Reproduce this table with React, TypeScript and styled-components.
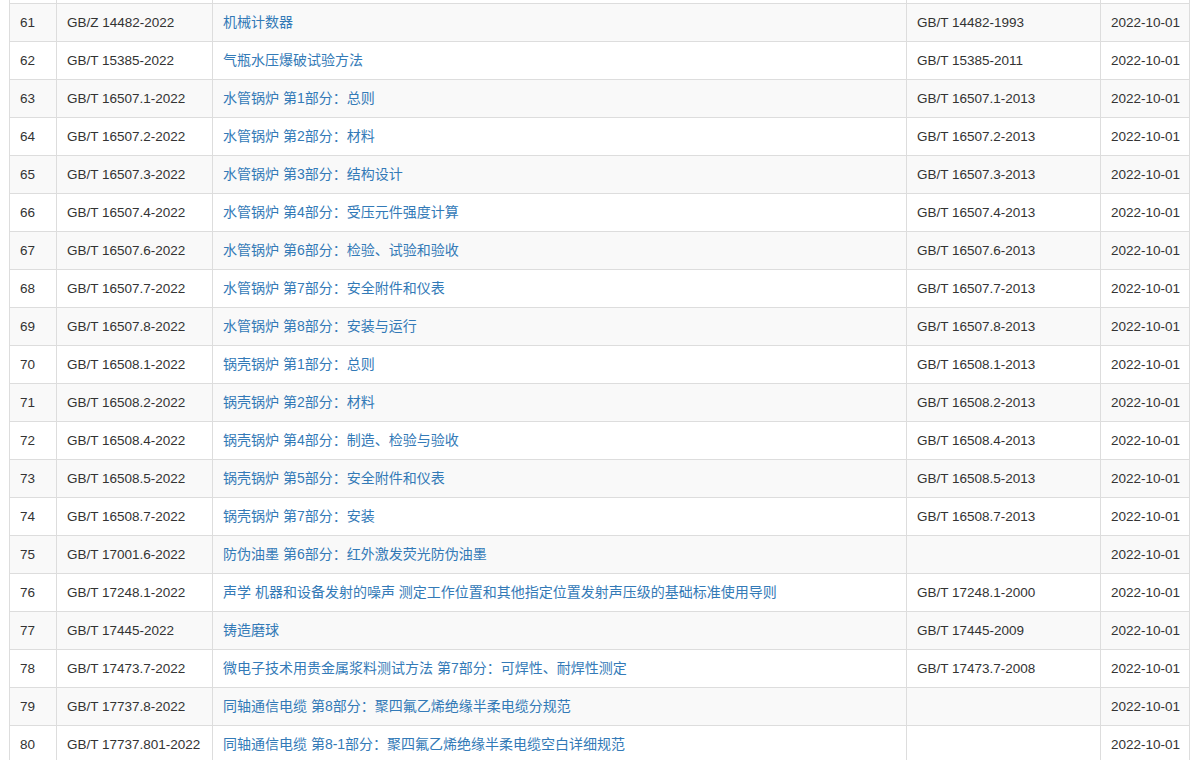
import React from "react";
import styled, { createGlobalStyle } from "styled-components";

const Global = createGlobalStyle`
  html, body { margin: 0; padding: 0; background: #fff; }
  body {
    font-family: "Liberation Sans", Arial, "Noto Sans CJK SC", sans-serif;
    color: #333;
  }
`;

const Viewport = styled.div`
  height: 760px;
  overflow: hidden;
  padding-left: 9px;
`;

const Table = styled.table`
  border-collapse: collapse;
  table-layout: fixed;
  width: 1181px;
  margin-top: -35px;
  border: 1px solid #ddd;
`;

const Row = styled.tr<{ $striped: boolean }>`
  background: ${(p) => (p.$striped ? "#f9f9f9" : "#fff")};
`;

const Cell = styled.td<{ $cjk?: boolean }>`
  border: 1px solid #ddd;
  height: 38px;
  padding: 0 10px;
  box-sizing: border-box;
  vertical-align: middle;
  white-space: nowrap;
  overflow: hidden;
  font-size: ${(p) => (p.$cjk ? "14px" : "13.5px")};
  line-height: 20px;
`;

const TitleLink = styled.a`
  color: #337ab7;
  text-decoration: none;
  position: relative;
  top: -1px;
`;

type Std = [number, string, string, string, string];

const rows: Std[] = [
  [61, "GB/Z 14482-2022", "机械计数器", "GB/T 14482-1993", "2022-10-01"],
  [62, "GB/T 15385-2022", "气瓶水压爆破试验方法", "GB/T 15385-2011", "2022-10-01"],
  [63, "GB/T 16507.1-2022", "水管锅炉 第1部分：总则", "GB/T 16507.1-2013", "2022-10-01"],
  [64, "GB/T 16507.2-2022", "水管锅炉 第2部分：材料", "GB/T 16507.2-2013", "2022-10-01"],
  [65, "GB/T 16507.3-2022", "水管锅炉 第3部分：结构设计", "GB/T 16507.3-2013", "2022-10-01"],
  [66, "GB/T 16507.4-2022", "水管锅炉 第4部分：受压元件强度计算", "GB/T 16507.4-2013", "2022-10-01"],
  [67, "GB/T 16507.6-2022", "水管锅炉 第6部分：检验、试验和验收", "GB/T 16507.6-2013", "2022-10-01"],
  [68, "GB/T 16507.7-2022", "水管锅炉 第7部分：安全附件和仪表", "GB/T 16507.7-2013", "2022-10-01"],
  [69, "GB/T 16507.8-2022", "水管锅炉 第8部分：安装与运行", "GB/T 16507.8-2013", "2022-10-01"],
  [70, "GB/T 16508.1-2022", "锅壳锅炉 第1部分：总则", "GB/T 16508.1-2013", "2022-10-01"],
  [71, "GB/T 16508.2-2022", "锅壳锅炉 第2部分：材料", "GB/T 16508.2-2013", "2022-10-01"],
  [72, "GB/T 16508.4-2022", "锅壳锅炉 第4部分：制造、检验与验收", "GB/T 16508.4-2013", "2022-10-01"],
  [73, "GB/T 16508.5-2022", "锅壳锅炉 第5部分：安全附件和仪表", "GB/T 16508.5-2013", "2022-10-01"],
  [74, "GB/T 16508.7-2022", "锅壳锅炉 第7部分：安装", "GB/T 16508.7-2013", "2022-10-01"],
  [75, "GB/T 17001.6-2022", "防伪油墨 第6部分：红外激发荧光防伪油墨", "", "2022-10-01"],
  [76, "GB/T 17248.1-2022", "声学 机器和设备发射的噪声 测定工作位置和其他指定位置发射声压级的基础标准使用导则", "GB/T 17248.1-2000", "2022-10-01"],
  [77, "GB/T 17445-2022", "铸造磨球", "GB/T 17445-2009", "2022-10-01"],
  [78, "GB/T 17473.7-2022", "微电子技术用贵金属浆料测试方法 第7部分：可焊性、耐焊性测定", "GB/T 17473.7-2008", "2022-10-01"],
  [79, "GB/T 17737.8-2022", "同轴通信电缆 第8部分：聚四氟乙烯绝缘半柔电缆分规范", "", "2022-10-01"],
  [80, "GB/T 17737.801-2022", "同轴通信电缆 第8-1部分：聚四氟乙烯绝缘半柔电缆空白详细规范", "", "2022-10-01"],
];

const widths = [47, 156, 694, 194, 89];

export default function App() {
  return (
    <>
      <Global />
      <Viewport>
        <Table>
          <colgroup>
            {widths.map((w, i) => (
              <col key={i} style={{ width: w }} />
            ))}
          </colgroup>
          <tbody>
            <Row $striped={false} aria-hidden="true">
              {widths.map((_, i) => (
                <Cell key={i} />
              ))}
            </Row>
            {rows.map(([n, code, title, old, date]) => (
              <Row key={n} $striped={n % 2 === 1}>
                <Cell>{n}</Cell>
                <Cell>{code}</Cell>
                <Cell $cjk>
                  <TitleLink href="#">{title}</TitleLink>
                </Cell>
                <Cell>{old}</Cell>
                <Cell>{date}</Cell>
              </Row>
            ))}
          </tbody>
        </Table>
      </Viewport>
    </>
  );
}
